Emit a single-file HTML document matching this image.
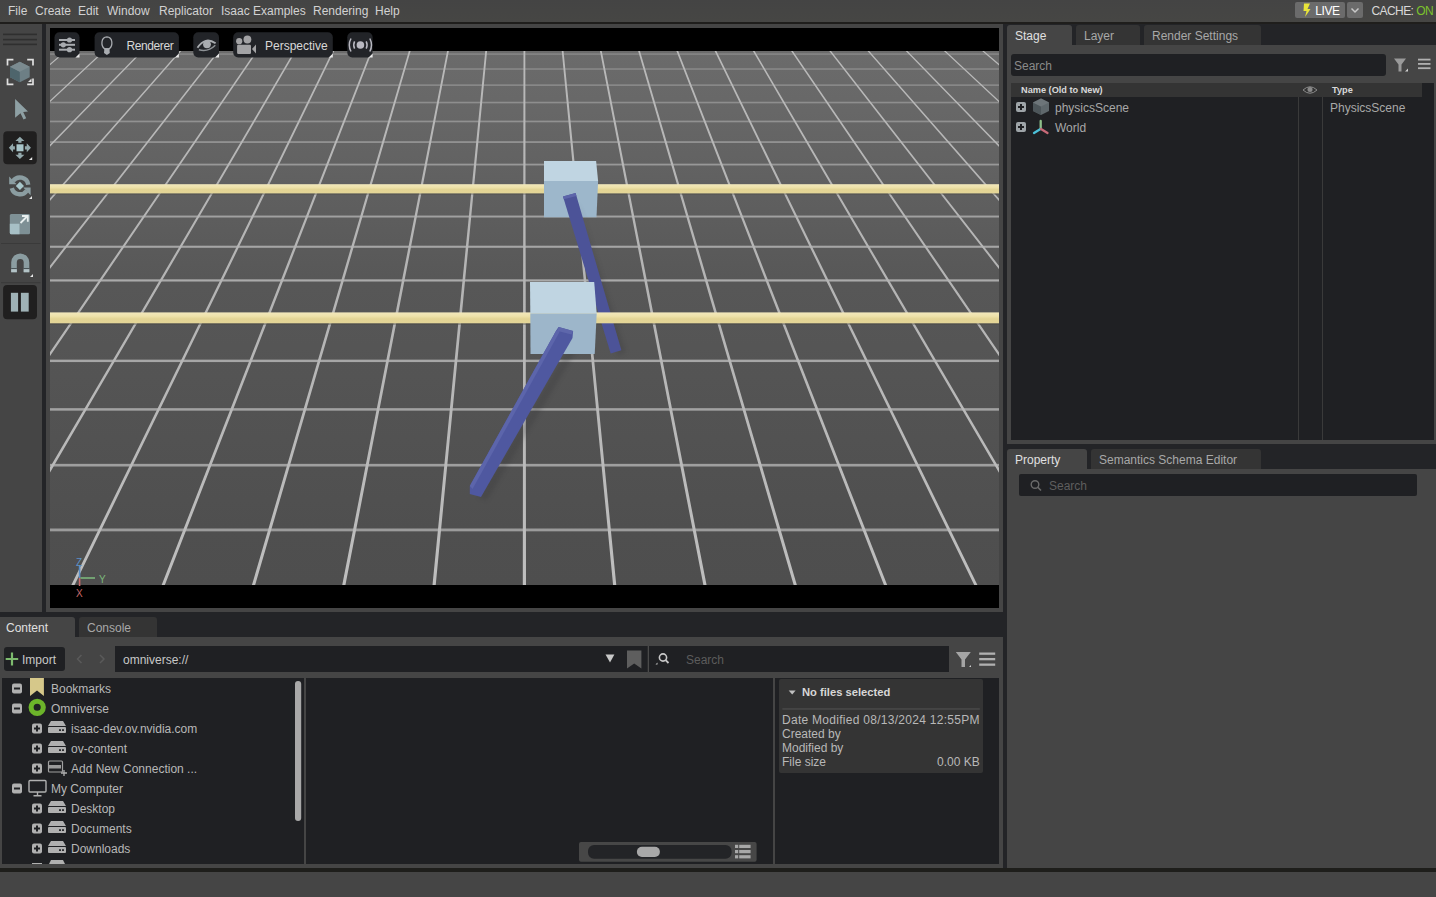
<!DOCTYPE html>
<html><head><meta charset="utf-8">
<style>
*{margin:0;padding:0;box-sizing:border-box}
html,body{width:1436px;height:897px;overflow:hidden;background:#232427;font-family:"Liberation Sans",sans-serif;font-size:12px;color:#c4c4c4}
.a{position:absolute}
.t{position:absolute;white-space:nowrap;line-height:1}
svg{position:absolute;left:0;top:0}
</style></head><body>
<div class="a" style="left:0;top:0;width:1436px;height:24px;background:#1f1e1c"></div><div class="a" style="left:0;top:0;width:1436px;height:22px;background:linear-gradient(#444444,#464644)"></div>
<div class="a" style="left:0;top:24px;width:42px;height:588px;background:#454545"></div>
<div class="a" style="left:46px;top:24px;width:957px;height:588px;background:#454545"></div>
<div class="a" style="left:50px;top:28px;width:949px;height:580px;background:#000"></div>

<div class="a" style="left:1007px;top:45px;width:429px;height:399px;background:#454545"></div>
<div class="a" style="left:1007px;top:25px;width:65px;height:20px;background:#454545;border-radius:3px 3px 0 0"></div>
<div class="a" style="left:1076px;top:25px;width:64px;height:20px;background:#343434;border-radius:3px 3px 0 0"></div>
<div class="a" style="left:1144px;top:25px;width:117px;height:20px;background:#343434;border-radius:3px 3px 0 0"></div>
<div class="a" style="left:1011px;top:54px;width:375px;height:22px;background:#1f2023;border-radius:3px"></div>
<div class="a" style="left:1011px;top:83px;width:423px;height:357px;background:#1f2023"></div>
<div class="a" style="left:1011px;top:83px;width:411px;height:14px;background:#343434"></div>
<div class="a" style="left:1298px;top:97px;width:1px;height:343px;background:#3a3a3a"></div>
<div class="a" style="left:1322px;top:97px;width:1px;height:343px;background:#3a3a3a"></div>

<div class="a" style="left:1007px;top:469px;width:429px;height:399px;background:#454545"></div>
<div class="a" style="left:1007px;top:449px;width:80px;height:20px;background:#454545;border-radius:3px 3px 0 0"></div>
<div class="a" style="left:1091px;top:449px;width:170px;height:20px;background:#343434;border-radius:3px 3px 0 0"></div>
<div class="a" style="left:1019px;top:474px;width:398px;height:22px;background:#1f2023;border-radius:2px"></div>

<div class="a" style="left:0;top:637px;width:1003px;height:231px;background:#454545"></div>
<div class="a" style="left:0;top:617px;width:75px;height:20px;background:#454545;border-radius:0 3px 0 0"></div>
<div class="a" style="left:79px;top:617px;width:78px;height:20px;background:#343434;border-radius:3px 3px 0 0"></div>
<div class="a" style="left:4px;top:647px;width:61px;height:24px;background:#1f2023;border-radius:3px"></div>
<div class="a" style="left:115px;top:646px;width:834px;height:26px;background:#1f2023"></div>
<div class="a" style="left:2px;top:678px;width:302px;height:186px;background:#1f2023"></div>
<div class="a" style="left:306px;top:678px;width:467px;height:186px;background:#1f2023"></div>
<div class="a" style="left:775px;top:678px;width:224px;height:186px;background:#1f2023"></div>
<div class="a" style="left:779px;top:679px;width:204px;height:94px;background:#343434;border-radius:2px"></div>

<div class="a" style="left:0;top:868px;width:1436px;height:4px;background:#1e1e1b"></div>
<div class="a" style="left:0;top:872px;width:1436px;height:25px;background:#454545"></div>
<div class="a" style="left:1295px;top:2px;width:50px;height:16px;background:#6b6b6b;border-radius:2px"></div>
<div class="a" style="left:1347px;top:2px;width:16px;height:16px;background:#6b6b6b;border-radius:2px"></div>

<svg width="1436" height="897">
<defs><linearGradient id="fl" x1="0" y1="0" x2="0" y2="1"><stop offset="0.000" stop-color="rgb(107,107,107)"/><stop offset="0.092" stop-color="rgb(104,104,104)"/><stop offset="0.438" stop-color="rgb(87,87,87)"/><stop offset="0.897" stop-color="rgb(79,79,79)"/><stop offset="1.000" stop-color="rgb(78,78,78)"/></linearGradient>
<linearGradient id="cl" gradientUnits="userSpaceOnUse" x1="0" y1="51" x2="0" y2="585"><stop offset="0.000" stop-color="rgb(185,185,185)"/><stop offset="0.438" stop-color="rgb(180,180,180)"/><stop offset="1.000" stop-color="rgb(190,190,190)"/></linearGradient>
<linearGradient id="yb" x1="0" y1="0" x2="0" y2="1"><stop offset="0" stop-color="#f2e8bc"/><stop offset="0.35" stop-color="#eee2aa"/><stop offset="0.6" stop-color="#e3d494"/><stop offset="1" stop-color="#e4d698"/></linearGradient>
<filter id="sh" x="-50%" y="-10%" width="200%" height="120%"><feGaussianBlur stdDeviation="2"/></filter>
<filter id="bl" x="-1%" y="-1%" width="102%" height="102%"><feGaussianBlur stdDeviation="0.45"/></filter>
<clipPath id="vc"><rect x="50" y="51" width="949" height="534"/></clipPath></defs>
<g clip-path="url(#vc)">
<rect x="50" y="51" width="949" height="534" fill="url(#fl)"/>
<g filter="url(#bl)">
<rect x="50" y="53.37" width="949" height="1.41" fill="rgb(137,137,137)"/>
<rect x="50" y="68.27" width="949" height="1.47" fill="rgb(138,138,138)"/>
<rect x="50" y="84.35" width="949" height="1.54" fill="rgb(140,140,140)"/>
<rect x="50" y="101.74" width="949" height="1.61" fill="rgb(142,142,142)"/>
<rect x="50" y="120.62" width="949" height="1.67" fill="rgb(145,145,145)"/>
<rect x="50" y="141.18" width="949" height="1.74" fill="rgb(148,148,148)"/>
<rect x="50" y="163.66" width="949" height="1.81" fill="rgb(152,152,152)"/>
<rect x="50" y="188.34" width="949" height="1.89" fill="rgb(155,155,155)"/>
<rect x="50" y="215.55" width="949" height="1.98" fill="rgb(160,160,160)"/>
<rect x="50" y="245.72" width="949" height="2.08" fill="rgb(165,165,165)"/>
<rect x="50" y="279.34" width="949" height="2.19" fill="rgb(170,170,170)"/>
<rect x="50" y="317.06" width="949" height="2.28" fill="rgb(168,168,168)"/>
<rect x="50" y="359.66" width="949" height="2.39" fill="rgb(166,166,166)"/>
<rect x="50" y="408.16" width="949" height="2.50" fill="rgb(162,162,162)"/>
<rect x="50" y="463.87" width="949" height="2.64" fill="rgb(159,159,159)"/>
<rect x="50" y="528.52" width="949" height="2.80" fill="rgb(155,155,155)"/>
<polygon fill="url(#cl)" points="26.64,51.00 -60.94,120.00 -162.47,200.00 -270.36,285.00 -416.23,400.00 -543.08,500.00 -650.91,585.00 -647.71,585.00 -540.05,500.00 -413.40,400.00 -267.76,285.00 -160.16,200.00 -58.90,120.00 28.44,51.00"/>
<polygon fill="url(#cl)" points="64.86,51.00 -15.99,120.00 -109.72,200.00 -209.32,285.00 -343.98,400.00 -461.08,500.00 -560.62,585.00 -557.42,585.00 -458.05,500.00 -341.15,400.00 -206.72,285.00 -107.42,200.00 -13.95,120.00 66.66,51.00"/>
<polygon fill="url(#cl)" points="103.08,51.00 28.96,120.00 -56.98,200.00 -148.29,285.00 -271.74,400.00 -379.09,500.00 -470.34,585.00 -467.13,585.00 -376.06,500.00 -268.91,400.00 -145.69,285.00 -54.67,200.00 31.00,120.00 104.88,51.00"/>
<polygon fill="url(#cl)" points="141.30,51.00 73.91,120.00 -4.23,200.00 -87.25,285.00 -199.49,400.00 -297.09,500.00 -380.05,585.00 -376.85,585.00 -294.06,500.00 -196.66,400.00 -84.65,285.00 -1.92,200.00 75.94,120.00 143.10,51.00"/>
<polygon fill="url(#cl)" points="179.52,51.00 118.85,120.00 48.52,200.00 -26.22,285.00 -127.24,400.00 -215.09,500.00 -289.77,585.00 -286.57,585.00 -212.06,500.00 -124.41,400.00 -23.62,285.00 50.83,200.00 120.89,120.00 181.32,51.00"/>
<polygon fill="url(#cl)" points="217.74,51.00 163.80,120.00 101.27,200.00 34.82,285.00 -55.00,400.00 -133.10,500.00 -199.48,585.00 -196.28,585.00 -130.07,500.00 -52.17,400.00 37.42,285.00 103.57,200.00 165.84,120.00 219.54,51.00"/>
<polygon fill="url(#cl)" points="255.96,51.00 208.75,120.00 154.01,200.00 95.85,285.00 17.25,400.00 -51.10,500.00 -109.20,585.00 -106.00,585.00 -48.07,500.00 20.08,400.00 98.45,285.00 156.32,200.00 210.79,120.00 257.76,51.00"/>
<polygon fill="url(#cl)" points="294.18,51.00 253.70,120.00 206.76,200.00 156.89,285.00 89.50,400.00 30.90,500.00 -18.91,585.00 -15.71,585.00 33.93,500.00 92.33,400.00 159.49,285.00 209.07,200.00 255.73,120.00 295.98,51.00"/>
<polygon fill="url(#cl)" points="332.40,51.00 298.64,120.00 259.51,200.00 217.92,285.00 161.75,400.00 112.90,500.00 71.37,585.00 74.57,585.00 115.93,500.00 164.58,400.00 220.52,285.00 261.82,200.00 300.68,120.00 334.20,51.00"/>
<polygon fill="url(#cl)" points="370.62,51.00 343.59,120.00 312.26,200.00 278.96,285.00 233.99,400.00 194.89,500.00 161.66,585.00 164.86,585.00 197.92,500.00 236.82,400.00 281.56,285.00 314.56,200.00 345.63,120.00 372.42,51.00"/>
<polygon fill="url(#cl)" points="408.84,51.00 388.54,120.00 365.00,200.00 339.99,285.00 306.24,400.00 276.89,500.00 251.95,585.00 255.15,585.00 279.92,500.00 309.07,400.00 342.59,285.00 367.31,200.00 390.58,120.00 410.64,51.00"/>
<polygon fill="url(#cl)" points="447.06,51.00 433.49,120.00 417.75,200.00 401.03,285.00 378.49,400.00 358.89,500.00 342.23,585.00 345.43,585.00 361.92,500.00 381.32,400.00 403.63,285.00 420.06,200.00 435.52,120.00 448.86,51.00"/>
<polygon fill="url(#cl)" points="485.28,51.00 478.43,120.00 470.50,200.00 462.06,285.00 450.74,400.00 440.89,500.00 432.51,585.00 435.72,585.00 443.92,500.00 453.57,400.00 464.66,285.00 472.81,200.00 480.47,120.00 487.08,51.00"/>
<polygon fill="url(#cl)" points="523.50,51.00 523.38,120.00 523.25,200.00 523.10,285.00 522.99,400.00 522.88,500.00 522.80,585.00 526.00,585.00 525.91,500.00 525.81,400.00 525.70,285.00 525.55,200.00 525.42,120.00 525.30,51.00"/>
<polygon fill="url(#cl)" points="561.72,51.00 568.33,120.00 575.99,200.00 584.13,285.00 595.23,400.00 604.88,500.00 613.08,585.00 616.28,585.00 607.91,500.00 598.06,400.00 586.73,285.00 578.30,200.00 570.37,120.00 563.52,51.00"/>
<polygon fill="url(#cl)" points="599.94,51.00 613.28,120.00 628.74,200.00 645.17,285.00 667.48,400.00 686.88,500.00 703.37,585.00 706.57,585.00 689.91,500.00 670.31,400.00 647.77,285.00 631.05,200.00 615.31,120.00 601.74,51.00"/>
<polygon fill="url(#cl)" points="638.16,51.00 658.22,120.00 681.49,200.00 706.21,285.00 739.73,400.00 768.88,500.00 793.65,585.00 796.85,585.00 771.91,500.00 742.56,400.00 708.80,285.00 683.80,200.00 660.26,120.00 639.96,51.00"/>
<polygon fill="url(#cl)" points="676.38,51.00 703.17,120.00 734.24,200.00 767.24,285.00 811.98,400.00 850.88,500.00 883.94,585.00 887.14,585.00 853.90,500.00 814.80,400.00 769.84,285.00 736.54,200.00 705.21,120.00 678.18,51.00"/>
<polygon fill="url(#cl)" points="714.60,51.00 748.12,120.00 786.98,200.00 828.28,285.00 884.22,400.00 932.87,500.00 974.23,585.00 977.43,585.00 935.90,500.00 887.05,400.00 830.88,285.00 789.29,200.00 750.16,120.00 716.40,51.00"/>
<polygon fill="url(#cl)" points="752.82,51.00 793.07,120.00 839.73,200.00 889.31,285.00 956.47,400.00 1014.87,500.00 1064.51,585.00 1067.71,585.00 1017.90,500.00 959.30,400.00 891.91,285.00 842.04,200.00 795.10,120.00 754.62,51.00"/>
<polygon fill="url(#cl)" points="791.04,51.00 838.01,120.00 892.48,200.00 950.35,285.00 1028.72,400.00 1096.87,500.00 1154.80,585.00 1157.99,585.00 1099.90,500.00 1031.55,400.00 952.94,285.00 894.79,200.00 840.05,120.00 792.84,51.00"/>
<polygon fill="url(#cl)" points="829.26,51.00 882.96,120.00 945.23,200.00 1011.38,285.00 1100.97,400.00 1178.87,500.00 1245.08,585.00 1248.28,585.00 1181.90,500.00 1103.80,400.00 1013.98,285.00 947.53,200.00 885.00,120.00 831.06,51.00"/>
<polygon fill="url(#cl)" points="867.48,51.00 927.91,120.00 997.97,200.00 1072.42,285.00 1173.21,400.00 1260.86,500.00 1335.37,585.00 1338.57,585.00 1263.89,500.00 1176.04,400.00 1075.02,285.00 1000.28,200.00 929.95,120.00 869.28,51.00"/>
<polygon fill="url(#cl)" points="905.70,51.00 972.86,120.00 1050.72,200.00 1133.45,285.00 1245.46,400.00 1342.86,500.00 1425.65,585.00 1428.85,585.00 1345.89,500.00 1248.29,400.00 1136.05,285.00 1053.03,200.00 974.89,120.00 907.50,51.00"/>
<polygon fill="url(#cl)" points="943.92,51.00 1017.80,120.00 1103.47,200.00 1194.48,285.00 1317.71,400.00 1424.86,500.00 1515.93,585.00 1519.13,585.00 1427.89,500.00 1320.54,400.00 1197.08,285.00 1105.78,200.00 1019.84,120.00 945.72,51.00"/>
<polygon fill="url(#cl)" points="982.14,51.00 1062.75,120.00 1156.22,200.00 1255.52,285.00 1389.95,400.00 1506.85,500.00 1606.22,585.00 1609.42,585.00 1509.88,500.00 1392.78,400.00 1258.12,285.00 1158.52,200.00 1064.79,120.00 983.94,51.00"/>
<polygon fill="url(#cl)" points="1020.36,51.00 1107.70,120.00 1208.96,200.00 1316.56,285.00 1462.20,400.00 1588.85,500.00 1696.51,585.00 1699.70,585.00 1591.88,500.00 1465.03,400.00 1319.15,285.00 1211.27,200.00 1109.74,120.00 1022.16,51.00"/>
</g>
<rect x="50" y="193.3" width="949" height="1.2" fill="#4a4744" opacity="0.6"/><rect x="50" y="323.2" width="949" height="1.4" fill="#4a4744" opacity="0.6"/><rect x="50" y="184.2" width="949" height="9.2" fill="url(#yb)"/><path d="M544,160.9 H596.1 L598.1,181 H544 Z" fill="#c0d5e2"/><path d="M544,181 H598.1 L596.5,217.3 H544 Z" fill="#9db7cb"/><path d="M578,200 L626,352 L618,356 Z" fill="#2e2e30" opacity="0.2" filter="url(#sh)"/><path d="M563,196.5 L575.6,193.1 L621.4,350.2 L610.7,353.5 Z" fill="#4c5398"/><path d="M563,196.5 L575.6,193.1 L576.4,196 L563.8,199.3 Z" fill="#5d65aa"/><rect x="50" y="312.4" width="949" height="10.9" fill="url(#yb)"/><path d="M573,340 L581,343 L487,500 L478,498 Z" fill="#2e2e30" opacity="0.22" filter="url(#sh)"/><path d="M530,282 H594.2 L596.7,313.5 H530.3 Z" fill="#c0d5e2"/><path d="M530.3,313.5 H596.7 L594.7,354 H530.5 Z" fill="#9db6ca"/><path d="M558.6,327 L573.1,331 L572.5,338 L481,497 L469.8,493.9 L469.8,486 L556.5,330 Z" fill="#4f58a0"/><path d="M556.5,330 L559.8,331.5 L472.5,489 L469.8,486 Z" fill="#5c65ab"/><path d="M558.6,327 L573.1,331 L571.5,334.5 L557,330.8 Z" fill="#5e67ab"/>
</g>
<g stroke-width="1.6"><path d="M79.6,565 V578" stroke="#5a8fc8"/><path d="M80.4,578 H95" stroke="#7bb77b"/><path d="M79.6,578 V586" stroke="#c86a6a"/></g><text x="76" y="565.5" font-size="10" fill="#5a8fc8" font-family="Liberation Sans">Z</text><text x="99" y="583" font-size="10" fill="#7bb77b" font-family="Liberation Sans">Y</text><text x="76" y="596.5" font-size="10" fill="#c86a6a" font-family="Liberation Sans">X</text>
<rect x="54.5" y="32.2" width="25" height="25.3" rx="5" fill="#222428"/><path d="M75.5,57.5 L79.5,53.5 L79.5,57.5 Z" fill="#e8e8e8"/><g fill="#a9acb0"><rect x="59" y="39" width="16" height="2"/><rect x="59" y="43.8" width="16" height="2"/><rect x="59" y="48.7" width="16" height="2"/><circle cx="69.5" cy="40" r="2.6"/><circle cx="63.3" cy="44.8" r="2.6"/><circle cx="69.5" cy="49.7" r="2.6"/></g><rect x="94.6" y="32.2" width="84.3" height="25.3" rx="5" fill="#222428"/><path d="M174.89999999999998,57.5 L178.89999999999998,53.5 L178.89999999999998,57.5 Z" fill="#e8e8e8"/><path d="M104.6,48.8 C100.5,45.5 101,37.2 106.9,36.9 C112.8,37.2 113.3,45.5 109.2,48.8 Z" fill="none" stroke="#a9acb0" stroke-width="1.3"/><path d="M104.4,48.3 L109.4,48.3 L109.8,53 L106.9,55 L104,53 Z" fill="#a9acb0"/><rect x="193.3" y="32.2" width="25.7" height="25.3" rx="5" fill="#222428"/><path d="M215.0,57.5 L219.0,53.5 L219.0,57.5 Z" fill="#e8e8e8"/><path d="M197.5,47.8 Q205,36 215.6,43.3" fill="none" stroke="#a9acb0" stroke-width="1.8"/><path d="M198.9,49.8 Q208,52.5 215.3,45.3" fill="none" stroke="#8d9195" stroke-width="1.5"/><circle cx="207" cy="44.3" r="3.9" fill="#a9acb0"/><rect x="233.2" y="32.2" width="99.6" height="25.3" rx="5" fill="#222428"/><path d="M328.79999999999995,57.5 L332.79999999999995,53.5 L332.79999999999995,57.5 Z" fill="#e8e8e8"/><g fill="#a3a3a5"><circle cx="239.2" cy="41.2" r="3.1"/><circle cx="247.4" cy="39.5" r="3.9"/><rect x="237.1" y="44.7" width="13.9" height="9.2" rx="1.2"/><path d="M252,49 L256,44.4 L256,53.6 Z"/></g><rect x="347.3" y="32.2" width="25.3" height="25.3" rx="5" fill="#222428"/><path d="M368.6,57.5 L372.6,53.5 L372.6,57.5 Z" fill="#e8e8e8"/><g fill="none" stroke="#b8b8c0" stroke-width="1.5"><path d="M351,38.5 Q347.6,45 351,51.5"/><path d="M354.6,41.3 Q352.8,45 354.6,48.7"/><path d="M369.8,38.5 Q373.2,45 369.8,51.5"/><path d="M366.2,41.3 Q368,45 366.2,48.7"/></g><circle cx="360.4" cy="45" r="3.8" fill="#b8b8c0"/>
<g fill="#2f2f2f"><rect x="3" y="33.6" width="34" height="1.6"/><rect x="3" y="38.8" width="34" height="1.6"/><rect x="3" y="43.6" width="34" height="1.6"/></g><g fill="none" stroke="#e0e0e0" stroke-width="1.7"><path d="M7.5,65.5 V59.6 H13.4"/><path d="M27.2,59.6 H33 V65.5"/><path d="M7.5,78.5 V84.3 H13.4"/><path d="M27.2,84.3 H33 V78.5"/></g><path d="M28,82 L31.5,78.5 L31.5,82 Z" fill="#e0e0e0"/><path d="M19.8,61.7 L29.7,66.8 L29.7,77.2 L19.8,82.2 L10,77.2 L10,66.8 Z" fill="#6d7f85"/><path d="M10,66.8 L19.8,71.8 L19.8,82.2 L10,77.2 Z" fill="#4e656c"/><path d="M19.8,61.7 L29.7,66.8 L19.8,71.8 L10,66.8 Z" fill="#7b8b90"/><path d="M15.1,98.9 L28,111.5 L23.2,112 L26.2,118.3 L23.5,119.5 L20.5,113.2 L15.1,117.8 Z" fill="#8ea0a4"/><rect x="3.3" y="131.3" width="33.5" height="33" rx="4" fill="#201f1f"/><g fill="#93a9ac"><path d="M19.90,136.80 L24.40,141.00 L21.50,141.00 L21.50,142.85 L18.30,142.85 L18.30,141.00 L15.40,141.00 Z"/><path d="M30.95,147.85 L26.75,152.35 L26.75,149.45 L24.90,149.45 L24.90,146.25 L26.75,146.25 L26.75,143.35 Z"/><path d="M19.90,158.90 L15.40,154.70 L18.30,154.70 L18.30,152.85 L21.50,152.85 L21.50,154.70 L24.40,154.70 Z"/><path d="M8.85,147.85 L13.05,143.35 L13.05,146.25 L14.90,146.25 L14.90,149.45 L13.05,149.45 L13.05,152.35 Z"/></g><rect x="16.5" y="144.3" width="7" height="7" fill="#a8c6ca"/><path d="M28.9,160.1 L32.2,157 L32.2,160.1 Z" fill="#e8e8e8"/><g fill="none" stroke="#8b9da1" stroke-width="4.4"><path d="M13.02,181.08 A8.4,8.4 0 0 1 28.22,184.73"/><path d="M11.79,188.07 A8.4,8.4 0 0 0 26.78,190.72"/></g><g fill="#8b9da1"><path d="M9.2,176.6 L16.6,184.3 L9.2,184.3 Z"/><path d="M23.2,187.5 L30.6,187.5 L30.6,195.2 Z"/></g><path d="M19.9,181.8 L24,185.9 L19.9,190 L15.8,185.9 Z" fill="#a8c6ca"/><path d="M29,199 L32,196 L32,199 Z" fill="#e8e8e8"/><rect x="9.8" y="214" width="20.2" height="20.2" rx="1.5" fill="#7e9095"/><path d="M9.8,223.7 H19.5 V234.2 H11.3 A1.5,1.5 0 0 1 9.8,232.7 Z" fill="#a7c0c6"/><g fill="none" stroke="#e8eeee" stroke-width="1.8"><path d="M20.5,223 L27.5,216"/><path d="M22,216 H27.8 V221.8"/></g><rect x="1" y="243" width="39.5" height="1" fill="#3a3a3a"/><path d="M11.2,272.2 V262.5 A9.05,9.05 0 0 1 29.3,262.5 V272.2 H23.7 V262.5 A3.45,3.45 0 0 0 16.8,262.5 V272.2 Z" fill="#8b9da1"/><g fill="#3a4245"><rect x="11.2" y="268.2" width="5.6" height="1"/><rect x="23.7" y="268.2" width="5.6" height="1"/></g><g fill="#b3c3c6"><rect x="11.2" y="269.2" width="5.6" height="3"/><rect x="23.7" y="269.2" width="5.6" height="3"/></g><path d="M30,277 L33,274 L33,277 Z" fill="#e8e8e8"/><rect x="1" y="282.2" width="39.5" height="1" fill="#3a3a3a"/><rect x="3.1" y="285.1" width="33.9" height="34.2" rx="4" fill="#201f1f"/><g fill="#9fb2b6"><rect x="10.9" y="292.8" width="7.2" height="18.8"/><rect x="20.9" y="292.8" width="7.8" height="18.8"/></g>
<rect x="1016" y="102" width="10" height="10" rx="2" fill="#9ea4a8"/><rect x="1018" y="106" width="6" height="2" fill="#1f2023"/><rect x="1020" y="104" width="2" height="6" fill="#1f2023"/><rect x="1016" y="122" width="10" height="10" rx="2" fill="#9ea4a8"/><rect x="1018" y="126" width="6" height="2" fill="#1f2023"/><rect x="1020" y="124" width="2" height="6" fill="#1f2023"/><path d="M1041,98.6 L1049,102.5 L1049,111 L1041,115 L1033,111 L1033,102.5 Z" fill="#5f686c"/><path d="M1033,102.5 L1041,106.5 L1041,115 L1033,111 Z" fill="#4d565a"/><path d="M1041,98.6 L1049,102.5 L1041,106.5 L1033,102.5 Z" fill="#6d7579"/><g stroke-width="2.3" stroke-linecap="round"><path d="M1040.7,121 V128.5" stroke="#8fc08a"/><path d="M1040.5,129 L1034,133" stroke="#4cc0d8"/><path d="M1041,129 L1047.5,133" stroke="#c86a78"/></g><path d="M1303,90 Q1310,83.5 1317,90 Q1310,96.5 1303,90 Z" fill="none" stroke="#8a8a8a" stroke-width="1"/><circle cx="1310" cy="89.5" r="2.5" fill="#8a8a8a"/><path d="M1394,58.5 H1406 L1401.5,64.5 V71.5 H1398.5 V64.5 Z" fill="#9a9a9a"/><path d="M1405,71.5 L1408,68.5 V71.5 Z" fill="#d0d0d0"/><g fill="#b0b0b0"><rect x="1418" y="58.7" width="12.5" height="1.8"/><rect x="1418" y="63" width="12.5" height="1.8"/><rect x="1418" y="67.3" width="12.5" height="1.8"/></g>
<path d="M12,652.5 V665.5 M5.7,659 H18.2" stroke="#7dbb6e" stroke-width="2.2"/><path d="M81.5,655 L77.5,659 L81.5,663" fill="none" stroke="#5a5a5a" stroke-width="1.5"/><path d="M100,655 L104,659 L100,663" fill="none" stroke="#5a5a5a" stroke-width="1.5"/><path d="M605.5,654.5 H614.4 L610,662.5 Z" fill="#c8c8c8"/><path d="M627,650.5 H641.4 V668.5 L634.2,663.5 L627,668.5 Z" fill="#5e5e5e"/><rect x="647.7" y="646" width="1.3" height="26" fill="#4a4a4a"/><circle cx="663" cy="657.5" r="3.6" fill="none" stroke="#c8c8c8" stroke-width="1.6"/><path d="M665.6,660.2 L668.5,663" stroke="#c8c8c8" stroke-width="1.8"/><path d="M655.5,664.5 L657.5,662.5 V664.5 Z" fill="#c8c8c8"/><path d="M955.8,652 H970.8 L965,659.5 V667 H961.5 V659.5 Z" fill="#a5a5a5"/><path d="M969,667 L971,665 V667 Z" fill="#d0d0d0"/><g fill="#b0b0b0"><rect x="979.2" y="652.5" width="16" height="2.3"/><rect x="979.2" y="658" width="16" height="2.3"/><rect x="979.2" y="663.5" width="16" height="2.3"/></g><rect x="12" y="683.5" width="10" height="10" rx="2" fill="#b0b0b0"/><rect x="14" y="687.5" width="6" height="2" fill="#1f2023"/><path d="M30,678 H43.9 V696 L37,690.5 L30,696 Z" fill="#d6c88a"/><rect x="12" y="703.5" width="10" height="10" rx="2" fill="#b0b0b0"/><rect x="14" y="707.5" width="6" height="2" fill="#1f2023"/><circle cx="37.2" cy="707.3" r="6.1" fill="none" stroke="#6cb42a" stroke-width="5.1"/><rect x="32" y="723.5" width="10" height="10" rx="2" fill="#b0b0b0"/><rect x="34" y="727.5" width="6" height="2" fill="#1f2023"/><rect x="36" y="725.5" width="2" height="6" fill="#1f2023"/><path d="M51,721 H63 L66,726 H48 Z" fill="#b0b0b0"/><rect x="48" y="727" width="18" height="6" rx="1" fill="#b0b0b0"/><rect x="59" y="729.3" width="2" height="1.6" fill="#1f2023"/><rect x="62" y="729.3" width="2" height="1.6" fill="#1f2023"/><rect x="32" y="743.5" width="10" height="10" rx="2" fill="#b0b0b0"/><rect x="34" y="747.5" width="6" height="2" fill="#1f2023"/><rect x="36" y="745.5" width="2" height="6" fill="#1f2023"/><path d="M51,741 H63 L66,746 H48 Z" fill="#b0b0b0"/><rect x="48" y="747" width="18" height="6" rx="1" fill="#b0b0b0"/><rect x="59" y="749.3" width="2" height="1.6" fill="#1f2023"/><rect x="62" y="749.3" width="2" height="1.6" fill="#1f2023"/><rect x="32" y="763.5" width="10" height="10" rx="2" fill="#b0b0b0"/><rect x="34" y="767.5" width="6" height="2" fill="#1f2023"/><rect x="36" y="765.5" width="2" height="6" fill="#1f2023"/><rect x="48.5" y="761" width="14" height="11" rx="1" fill="none" stroke="#a0a0a0" stroke-width="1.2"/><rect x="49" y="765" width="12" height="3.5" fill="#9a9a9a"/><path d="M64,770 V776 M61,773 H67" stroke="#b0b0b0" stroke-width="1.3"/><rect x="12" y="783.5" width="10" height="10" rx="2" fill="#b0b0b0"/><rect x="14" y="787.5" width="6" height="2" fill="#1f2023"/><rect x="29" y="780.5" width="17" height="11.5" rx="1" fill="none" stroke="#b0b0b0" stroke-width="1.4"/><path d="M37.5,792 V795.5 M33.5,795.8 H41.5" stroke="#b0b0b0" stroke-width="1.4"/><rect x="32" y="803.5" width="10" height="10" rx="2" fill="#b0b0b0"/><rect x="34" y="807.5" width="6" height="2" fill="#1f2023"/><rect x="36" y="805.5" width="2" height="6" fill="#1f2023"/><path d="M51,801 H63 L66,806 H48 Z" fill="#b0b0b0"/><rect x="48" y="807" width="18" height="6" rx="1" fill="#b0b0b0"/><rect x="59" y="809.3" width="2" height="1.6" fill="#1f2023"/><rect x="62" y="809.3" width="2" height="1.6" fill="#1f2023"/><rect x="32" y="823.5" width="10" height="10" rx="2" fill="#b0b0b0"/><rect x="34" y="827.5" width="6" height="2" fill="#1f2023"/><rect x="36" y="825.5" width="2" height="6" fill="#1f2023"/><path d="M51,821 H63 L66,826 H48 Z" fill="#b0b0b0"/><rect x="48" y="827" width="18" height="6" rx="1" fill="#b0b0b0"/><rect x="59" y="829.3" width="2" height="1.6" fill="#1f2023"/><rect x="62" y="829.3" width="2" height="1.6" fill="#1f2023"/><rect x="32" y="843.5" width="10" height="10" rx="2" fill="#b0b0b0"/><rect x="34" y="847.5" width="6" height="2" fill="#1f2023"/><rect x="36" y="845.5" width="2" height="6" fill="#1f2023"/><path d="M51,841 H63 L66,846 H48 Z" fill="#b0b0b0"/><rect x="48" y="847" width="18" height="6" rx="1" fill="#b0b0b0"/><rect x="59" y="849.3" width="2" height="1.6" fill="#1f2023"/><rect x="62" y="849.3" width="2" height="1.6" fill="#1f2023"/><rect x="32" y="863" width="10" height="1" fill="#b0b0b0"/><path d="M51,860 H63 L65,864 H49 Z" fill="#b0b0b0"/><rect x="295" y="681" width="6.2" height="140" rx="3" fill="#a8a8a8"/><rect x="579" y="842" width="177.6" height="19.7" rx="2" fill="#474747"/><rect x="588" y="845" width="143.6" height="13.7" rx="6" fill="#232427"/><rect x="636.9" y="846.8" width="23" height="10.2" rx="5" fill="#a8a8a8"/><g fill="#a8a8a8"><rect x="735" y="844.8" width="3.2" height="3.2"/><rect x="739.2" y="844.8" width="11.4" height="3.2"/><rect x="735" y="850" width="3.2" height="3.2"/><rect x="739.2" y="850" width="11.4" height="3.2"/><rect x="735" y="855.2" width="3.2" height="3.2"/><rect x="739.2" y="855.2" width="11.4" height="3.2"/></g><path d="M788.7,690.5 H795.6 L792.2,694.5 Z" fill="#c0c0c0"/><rect x="782.4" y="708.3" width="197.4" height="1.3" fill="#4c4c4c"/><path d="M1304,3.5 L1310,3.5 L1307.5,9 L1310.5,9 L1305,17 L1306.5,11 L1303.5,11 Z" fill="#e8e43a"/><path d="M1351.5,8.5 L1355,12 L1358.5,8.5" fill="none" stroke="#c8c8c8" stroke-width="1.5"/><circle cx="1035" cy="484.5" r="3.8" fill="none" stroke="#6a6a6a" stroke-width="1.4"/><path d="M1037.8,487.3 L1041,490.5" stroke="#6a6a6a" stroke-width="1.6"/>
</svg>

<div class="t" style="left:8px;top:5px;font-size:12px;color:#d2d2d2">
<span class="t" style="left:0">File</span>
<span class="t" style="left:27px">Create</span>
<span class="t" style="left:70px">Edit</span>
<span class="t" style="left:99px">Window</span>
<span class="t" style="left:151px">Replicator</span>
<span class="t" style="left:213px">Isaac Examples</span>
<span class="t" style="left:305px">Rendering</span>
<span class="t" style="left:367px">Help</span>
</div>
<div class="t" style="left:1315.3px;top:5px;font-size:12px;letter-spacing:-0.4px;color:#ffffff">LIVE</div>
<div class="t" style="left:1371.5px;top:5px;font-size:12px;letter-spacing:-0.58px;color:#d8d8d8">CACHE: <span style="color:#7cc22c">ON</span></div>

<div class="t" style="left:126.5px;top:40px;color:#d8d8d8;letter-spacing:-0.4px">Renderer</div>
<div class="t" style="left:265px;top:40px;color:#d8d8d8">Perspective</div>

<div class="t" style="left:1015px;top:30px;color:#e0e0e0">Stage</div>
<div class="t" style="left:1084px;top:30px;color:#a8a8a8">Layer</div>
<div class="t" style="left:1152px;top:30px;color:#a8a8a8">Render Settings</div>
<div class="t" style="left:1014px;top:60px;color:#8a8a8a">Search</div>
<div class="t" style="left:1021px;top:86px;font-size:9.2px;font-weight:bold;color:#d8d8d8">Name (Old to New)</div>
<div class="t" style="left:1332px;top:86px;font-size:9.2px;font-weight:bold;color:#d8d8d8">Type</div>
<div class="t" style="left:1055px;top:102px;color:#a8a8a8">physicsScene</div>
<div class="t" style="left:1055px;top:122px;color:#a8a8a8">World</div>
<div class="t" style="left:1330px;top:102px;color:#a8a8a8">PhysicsScene</div>

<div class="t" style="left:1015px;top:454px;color:#e0e0e0">Property</div>
<div class="t" style="left:1099px;top:454px;color:#a8a8a8">Semantics Schema Editor</div>
<div class="t" style="left:1049px;top:480px;color:#5e5e5e">Search</div>

<div class="t" style="left:6px;top:622px;color:#e0e0e0">Content</div>
<div class="t" style="left:87px;top:622px;color:#a8a8a8">Console</div>
<div class="t" style="left:22px;top:654px;color:#c8c8c8">Import</div>
<div class="t" style="left:123px;top:654px;color:#c8c8c8">omniverse://</div>
<div class="t" style="left:686px;top:654px;color:#5c5c5c">Search</div>

<div class="t" style="left:51px;top:683px;color:#b8b8b8">Bookmarks</div>
<div class="t" style="left:51px;top:703px;color:#b8b8b8">Omniverse</div>
<div class="t" style="left:71px;top:723px;color:#b8b8b8">isaac-dev.ov.nvidia.com</div>
<div class="t" style="left:71px;top:743px;color:#b8b8b8">ov-content</div>
<div class="t" style="left:71px;top:763px;color:#b8b8b8">Add New Connection ...</div>
<div class="t" style="left:51px;top:783px;color:#b8b8b8">My Computer</div>
<div class="t" style="left:71px;top:803px;color:#b8b8b8">Desktop</div>
<div class="t" style="left:71px;top:823px;color:#b8b8b8">Documents</div>
<div class="t" style="left:71px;top:843px;color:#b8b8b8">Downloads</div>

<div class="t" style="left:802px;top:687px;font-size:11.2px;font-weight:bold;color:#d8d8d8">No files selected</div>
<div class="t" style="left:782px;top:714px;color:#b8b8b8;letter-spacing:0.28px">Date Modified 08/13/2024 12:55PM</div>
<div class="t" style="left:782px;top:728px;color:#b8b8b8">Created by</div>
<div class="t" style="left:782px;top:742px;color:#b8b8b8">Modified by</div>
<div class="t" style="left:782px;top:756px;color:#b8b8b8">File size</div>
<div class="t" style="left:937px;top:756px;color:#b8b8b8">0.00 KB</div>
</body></html>
